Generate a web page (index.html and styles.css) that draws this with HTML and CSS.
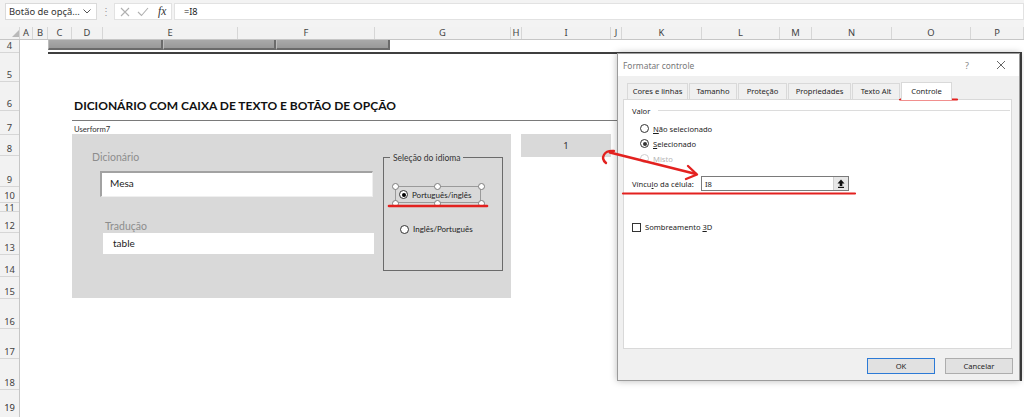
FILE: index.html
```html
<!DOCTYPE html>
<html lang="pt">
<head>
<meta charset="utf-8">
<title>Formatar controle</title>
<link rel="stylesheet" href="styles.css">
</head>
<body>
<div class="app">
  <div class="fbar">
    <div class="namebox"><span>Botão de opçã...</span>
      <svg class="chev" width="8" height="5" viewBox="0 0 8 5"><polyline points="0.5,0.5 4,4 7.5,0.5" fill="none" stroke="#555" stroke-width="1"/></svg>
    </div>
    <div class="fdots">⋮</div>
    <div class="ficons">
      <svg width="10" height="10" viewBox="0 0 10 10"><path d="M1 1 L9 9 M9 1 L1 9" stroke="#b0b0b0" stroke-width="1.1" fill="none"/></svg>
      <svg width="12" height="10" viewBox="0 0 12 10"><polyline points="1,5 4.5,8.5 11,1" stroke="#b0b0b0" stroke-width="1.1" fill="none"/></svg>
      <span class="fx">fx</span>
    </div>
    <div class="finput">=I8</div>
  </div>

  <div class="colhead">
    <div class="ch corner"><svg width="7" height="7" viewBox="0 0 7 7"><polygon points="7,0 7,7 0,7" fill="#b9b9b9"/></svg></div>
    <div class="ch">A</div><div class="ch">B</div><div class="ch">C</div><div class="ch">D</div>
    <div class="ch">E</div><div class="ch">F</div><div class="ch">G</div><div class="ch">H</div>
    <div class="ch">I</div><div class="ch">J</div><div class="ch">K</div><div class="ch">L</div>
    <div class="ch">M</div><div class="ch">N</div><div class="ch">O</div><div class="ch">P</div>
  </div>

  <div class="main">
    <div class="rowhead">
      <div class="rh">4</div><div class="rh">5</div><div class="rh">6</div><div class="rh">7</div>
      <div class="rh">8</div><div class="rh">9</div><div class="rh">10</div><div class="rh r11">11</div>
      <div class="rh">12</div><div class="rh">13</div><div class="rh">14</div><div class="rh">15</div>
      <div class="rh">16</div><div class="rh">17</div><div class="rh">18</div><div class="rh r19">19</div>
    </div>

    <div class="canvas">
      <div class="strip"><div class="seg s1"></div><div class="seg s2"></div><div class="seg s3"></div></div>
      <div class="frame"></div>

      <div class="heading">
        <h1 class="title">DICIONÁRIO COM CAIXA DE TEXTO E BOTÃO DE OPÇÃO</h1>
        <div class="uname">Userform7</div>
      </div>

      <div class="uform">
        <div class="ucol">
          <div class="ulabel l1">Dicionário</div>
          <div class="tbox mesa">Mesa</div>
          <div class="ulabel l2">Tradução</div>
          <div class="tbox trad">table</div>
        </div>
        <div class="lang">
          <span class="legend">Seleção do idioma</span>
          <div class="sel">
            <span class="srb on"></span><span class="stxt">Português/inglês</span>
            <i class="hd h1"></i><i class="hd h2"></i><i class="hd h3"></i>
            <i class="hd h4"></i><i class="hd h5"></i><i class="hd h6"></i>
          </div>
          <div class="opt2"><span class="srb"></span><span class="stxt">Inglês/Português</span></div>
        </div>
      </div>

      <div class="cell-i8">1</div>

      <div class="dlg">
        <div class="dlg-title">
          <span class="dt">Formatar controle</span>
          <span class="dq">?</span>
          <svg class="dx" width="10" height="10" viewBox="0 0 10 10"><path d="M1 1 L9 9 M9 1 L1 9" stroke="#666" stroke-width="1" fill="none"/></svg>
        </div>
        <div class="dlg-body">
          <div class="tabs">
            <div class="tab t1">Cores e linhas</div>
            <div class="tab t2">Tamanho</div>
            <div class="tab t3">Proteção</div>
            <div class="tab t4">Propriedades</div>
            <div class="tab t5">Texto Alt</div>
            <div class="tab t6 on">Controle</div>
          </div>
          <div class="panel">
            <div class="grp"><span>Valor</span><i class="gline"></i></div>
            <div class="opts">
              <div class="opt"><span class="rb"></span><span><u>N</u>ão selecionado</span></div>
              <div class="opt"><span class="rb on"></span><span><u>S</u>elecionado</span></div>
              <div class="opt dis"><span class="rb"></span><span>Misto</span></div>
            </div>
            <div class="link">
              <span class="llabel">Víncu<u>l</u>o da célula:</span>
              <div class="refedit"><span class="rv">I8</span>
                <span class="refbtn"><svg width="8" height="9" viewBox="0 0 8 9"><path d="M4 0.5 L7.5 4.5 H5.3 V7 H2.7 V4.5 H0.5 Z" fill="#111"/><rect x="1" y="7.8" width="6" height="1.2" fill="#111"/></svg></span>
              </div>
            </div>
            <div class="chk"><span class="cb"></span><span>Sombreamento <u>3</u>D</span></div>
          </div>
          <div class="btns">
            <div class="btn ok">OK</div>
            <div class="btn">Cancelar</div>
          </div>
        </div>
      </div>
    </div>
  </div>

  <svg class="annot" width="1024" height="417" viewBox="0 0 1024 417">
    <g stroke="#e3211f" fill="none" stroke-linecap="round" stroke-linejoin="round">
      <path d="M389 206 L487 206" stroke-width="2.6"/>
      <path d="M900 99.5 L957 99.5" stroke-width="2.2"/>
      <path d="M623 193.5 L855 193.5" stroke-width="2.2"/>
      <path d="M614 151 C604 150 600 158 606 163" stroke-width="2.4"/>
      <path d="M610 152.5 L696 174" stroke-width="2.4"/>
      <path d="M688 166 L697 174.5 L686 179" stroke-width="2.4"/>
    </g>
  </svg>
</div>
</body>
</html>
```

FILE: styles.css
```css
* { box-sizing: border-box; margin: 0; padding: 0; }
html, body { width: 1024px; height: 417px; overflow: hidden; background: #fff; }
body { font-family: "Noto Sans", "Open Sans", sans-serif; color: #222; }

.app { position: relative; width: 1024px; height: 417px; display: flex; flex-direction: column; overflow: hidden; }

/* formula bar */
.fbar { height: 27px; flex: none; background: #f3f3f3; display: flex; align-items: flex-start; padding: 3px 0 0 5px; }
.namebox { width: 92px; height: 17px; background: #fff; border: 1px solid #dadada; display: flex; align-items: center; justify-content: space-between; padding: 0 5px 0 3px; font-size: 9.4px; color: #333; }
.chev { flex: none; }
.fdots { width: 16px; text-align: center; font-size: 10px; color: #9a9a9a; line-height: 17px; margin-left: 1px; }
.ficons { width: 58px; height: 17px; background: #fff; border: 1px solid #e2e2e2; display: flex; align-items: center; gap: 7px; padding-left: 5px; }
.fx { font-family: "Liberation Serif", serif; font-style: italic; font-size: 11.5px; color: #333; line-height: 1; margin-left: 2px; }
.finput { flex: 1; height: 17px; background: #fff; border: 1px solid #e2e2e2; margin-left: 2px; font-size: 9.2px; line-height: 15px; padding-left: 9px; color: #222; }

/* column header */
.colhead { height: 13px; flex: none; display: grid; grid-template-columns: 20px 13px 15px 24px 31px 135px 137px 136px 11px 89px 11px 80px 78px 32px 80px 79px 53px; background: #f2f2f2; border-bottom: 1px solid #c6c6c6; }
.ch { border-right: 1px solid #d6d6d6; font-size: 9.4px; color: #444; text-align: center; line-height: 12px; overflow: hidden; }
.corner { display: flex; align-items: flex-end; justify-content: flex-end; padding: 0 0 2px 0; }

/* body */
.main { height: 377px; flex: none; display: flex; }
.rowhead { width: 20px; height: 377px; flex: none; display: grid; grid-template-rows: 13px 29px 29px 24px 21px 31px 16px 9px 21px 22px 22px 22px 30px 30px 31px 27px; background: #f2f2f2; border-right: 1px solid #c6c6c6; }
.rh { border-bottom: 1px solid #d6d6d6; font-size: 9.4px; color: #444; text-align: center; line-height: 12px; display: flex; align-items: flex-end; justify-content: center; overflow: hidden; }
.r11 { align-items: flex-start; line-height: 9px; font-size: 9px; }
.r19 { align-items: flex-start; padding-top: 12px; border-bottom: none; color: #333; }

.canvas { position: relative; flex: 1; background: #fff; overflow: hidden; }

/* row 4 buttons strip */
.strip { position: absolute; left: 28px; top: 0; width: 342px; height: 10px; display: flex; }
.seg { height: 10px; background: linear-gradient(#a9a9a9, #999); border-bottom: 2px solid #6a6a6a; border-right: 2px solid #6a6a6a; border-left: 1px solid #bcbcbc; }
.s1 { width: 115px; }
.s2 { width: 113px; }
.s3 { width: 114px; }

.frame { position: absolute; left: 28px; top: 12px; width: 974px; height: 329px; border-top: 2px solid #3f3f3f; border-right: 2px solid #3f3f3f; }

/* heading */
.heading { position: absolute; left: 52px; top: 56px; width: 600px; font-family: Lato, "Open Sans", sans-serif; }
.title { font-size: 12px; font-weight: 700; line-height: 20px; padding: 0 0 4px 2px; border-bottom: 1px solid #7a7a7a; color: #111; white-space: nowrap; }
.uname { font-size: 7.7px; line-height: 12px; margin-top: 2px; padding-left: 2px; color: #333; }

/* userform */
.uform { position: absolute; left: 52px; top: 94px; width: 439px; height: 164px; background: #d9d9d9; display: flex; font-family: Lato, "Open Sans", sans-serif; }
.ucol { width: 311px; flex: none; display: flex; flex-direction: column; align-items: flex-start; }
.ulabel { color: #8d8d8d; font-size: 10.5px; line-height: 14px; }
.l1 { margin: 16px 0 0 20px; }
.l2 { margin: 22px 0 0 33px; }
.tbox { background: #fff; font-size: 10px; color: #222; }
.mesa { margin: 7px 0 0 28px; width: 273px; height: 26px; border-top: 2px solid #a2a2a2; border-left: 2px solid #a2a2a2; border-right: 1px solid #efefef; border-bottom: 1px solid #efefef; padding-left: 8px; line-height: 21px; }
.trad { margin-left: 31px; width: 271px; height: 21px; padding-left: 10px; line-height: 21px; }

.lang { position: relative; margin-top: 23px; width: 120px; height: 114px; border: 1px solid #6b6b6b; padding: 28px 0 0 11px; }
.legend { position: absolute; left: 6px; top: -6px; padding: 0 3px; background: #d9d9d9; font-size: 8.5px; line-height: 12px; color: #333; }
.sel { position: relative; width: 86px; height: 17px; border: 1px solid #9a9a9a; display: flex; align-items: center; padding-left: 3px; gap: 4px; }
.srb { width: 9px; height: 9px; border-radius: 50%; border: 1px solid #333; background: #fff; flex: none; position: relative; }
.srb.on::after { content: ""; position: absolute; left: 1.5px; top: 1.5px; width: 4px; height: 4px; border-radius: 50%; background: #000; }
.stxt { font-size: 8px; color: #222; line-height: 12px; white-space: nowrap; }
.hd { position: absolute; width: 7px; height: 7px; border-radius: 50%; border: 1px solid #7d7d7d; background: #fff; }
.h1 { left: -4.5px; top: -4.5px; }
.h2 { left: 38px; top: -4.5px; }
.h3 { right: -4.5px; top: -4.5px; }
.h4 { left: -4.5px; bottom: -4.5px; }
.h5 { left: 38px; bottom: -4.5px; }
.h6 { right: -4.5px; bottom: -4.5px; }
.opt2 { display: flex; align-items: center; gap: 4px; margin: 20px 0 0 5px; height: 12px; }

.cell-i8 { position: absolute; left: 501px; top: 94px; width: 90px; height: 23px; background: #d9d9d9; text-align: center; line-height: 23px; font-size: 9.5px; color: #333; }

/* dialog */
.dlg { position: absolute; left: 597px; top: 13px; width: 403px; height: 328px; border: 1px solid #9b9b9b; background: #f0f0f0; box-shadow: 0 0 7px rgba(0,0,0,0.28); display: flex; flex-direction: column; font-size: 7.6px; color: #1e1e1e; }
.dlg-title { height: 22px; flex: none; background: #fff; display: flex; align-items: center; padding-left: 5px; }
.dt { color: #777; font-size: 8.4px; flex: 1; }
.dq { color: #888; font-size: 9px; margin-right: 27px; }
.dx { margin-right: 13px; }
.dlg-body { flex: 1; display: flex; flex-direction: column; padding: 6px 6px 0 5px; }
.tabs { display: flex; align-items: flex-end; height: 17px; padding-left: 4px; position: relative; z-index: 1; }
.tab { height: 16px; line-height: 15px; text-align: center; border: 1px solid #d9d9d9; border-bottom: none; background: #f0f0f0; margin-right: 1px; white-space: nowrap; }
.tab.on { height: 18px; background: #fff; margin-bottom: -1px; line-height: 17px; }
.t1 { width: 61px; }
.t2 { width: 48px; }
.t3 { width: 49px; }
.t4 { width: 63px; }
.t5 { width: 48px; }
.t6 { width: 51px; }

.panel { width: 389px; height: 250px; background: #fff; border: 1px solid #d9d9d9; padding: 5px 0 0 8px; flex: none; }
.grp { display: flex; align-items: center; height: 12px; }
.gline { flex: none; width: 352px; height: 1px; background: #dcdcdc; margin-left: 8px; margin-top: -1px; }
.opts { margin-top: 4px; padding-left: 8px; }
.opt { display: flex; align-items: center; height: 15px; gap: 4px; }
.rb { width: 9px; height: 9px; border-radius: 50%; border: 1px solid #333; background: #fff; position: relative; flex: none; }
.rb.on::after { content: ""; position: absolute; left: 1.5px; top: 1.5px; width: 4px; height: 4px; border-radius: 50%; background: #333; }
.dis { color: #b5b5b5; }
.dis .rb { border-color: #cfcfcf; }
.link { display: flex; align-items: center; height: 15px; margin-top: 10px; }
.llabel { width: 69px; flex: none; }
.refedit { width: 148px; height: 15px; border: 1px solid #7a7a7a; display: flex; align-items: center; justify-content: space-between; }
.rv { padding-left: 3px; }
.refbtn { width: 15px; height: 13px; border-left: 1px solid #cfcfcf; background: #e7e7e7; display: flex; align-items: center; justify-content: center; }
.chk { display: flex; align-items: center; gap: 4px; height: 12px; margin-top: 30px; }
.cb { width: 9px; height: 9px; border: 1px solid #333; background: #fff; flex: none; }

.btns { display: flex; justify-content: flex-end; gap: 10px; margin-top: 9px; padding-right: 0; }
.btn { width: 68px; height: 16px; background: #e1e1e1; border: 1px solid #adadad; text-align: center; line-height: 14px; }
.btn.ok { border-color: #2c7ad6; }

.annot { position: absolute; left: 0; top: 0; pointer-events: none; }
```
